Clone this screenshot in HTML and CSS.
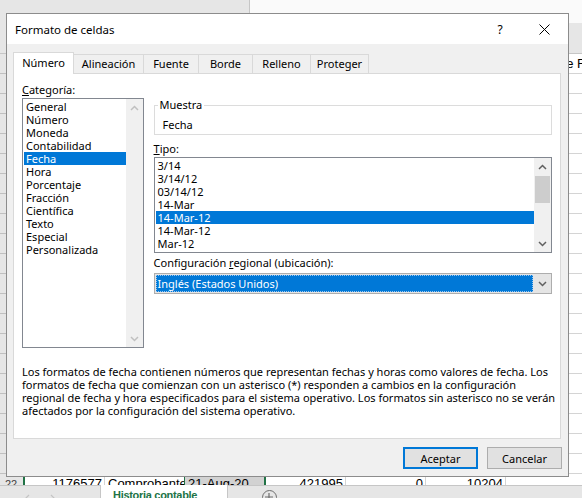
FILE: index.html
```html
<!DOCTYPE html>
<html lang="es">
<head>
  <meta charset="UTF-8" />
  <title>Formato de celdas</title>
  <link rel="stylesheet" href="styles.css">
</head>
<body>
  <!-- Hoja de cálculo de fondo -->
  <div class="sheet">
    <div class="sheet-top">
      <div class="name-box"></div>
      <div class="formula-bar"></div>
    </div>
    <div class="col-heads"></div>
    <div class="grid">
      <div class="row-heads"></div>
      <div class="cells">
        <div class="cell-text">de Fecha</div>
      </div>
    </div>
    <div class="last-row">
      <div class="rh">22</div>
      <div class="c num">1176577</div>
      <div class="c txt">Comprobante</div>
      <div class="c sel">21-Aug-20</div>
      <div class="c num">421995</div>
      <div class="c num">0</div>
      <div class="c num">10204</div>
    </div>
    <div class="sheet-tabs">
      <svg class="nav nav-prev" width="8" height="8" viewBox="0 0 8 8"><polyline points="5,1 2,4 5,7" /></svg>
      <svg class="nav nav-next" width="8" height="8" viewBox="0 0 8 8"><polyline points="3,1 6,4 3,7" /></svg>
      <div class="sheet-tab">Historia contable</div>
      <span class="add-sheet">
        <svg width="14" height="14" viewBox="0 0 14 14"><path d="M7 3 V11 M3 7 H11" /></svg>
      </span>
    </div>
  </div>

  <!-- Cuadro de diálogo -->
  <div class="dialog">
    <div class="titlebar">
      <span class="title">Formato de celdas</span>
      <span class="help">?</span>
      <span class="close">
        <svg width="11" height="11" viewBox="0 0 11 11"><path d="M0.5 0.5 L10.5 10.5 M10.5 0.5 L0.5 10.5" /></svg>
      </span>
    </div>

    <div class="dialog-body">
      <div class="tabs">
        <div class="tab active" style="width:61px">Número</div>
        <div class="tab" style="width:71px">Alineación</div>
        <div class="tab" style="width:56px">Fuente</div>
        <div class="tab" style="width:55px">Borde</div>
        <div class="tab" style="width:59px">Relleno</div>
        <div class="tab" style="width:59px">Proteger</div>
      </div>

      <div class="panel">
        <div class="format-row">
          <div class="col-category">
            <div class="label"><u>C</u>ategoría:</div>
            <div class="listbox category-list">
              <ul>
                <li>General</li>
                <li>Número</li>
                <li>Moneda</li>
                <li>Contabilidad</li>
                <li class="selected">Fecha</li>
                <li>Hora</li>
                <li>Porcentaje</li>
                <li>Fracción</li>
                <li>Científica</li>
                <li>Texto</li>
                <li>Especial</li>
                <li>Personalizada</li>
              </ul>
              <div class="scrollbar disabled">
                <span class="arrow"><svg width="9" height="6" viewBox="0 0 9 6"><polyline points="1,5 4.5,1.5 8,5" /></svg></span>
                <span class="arrow"><svg width="9" height="6" viewBox="0 0 9 6"><polyline points="1,1 4.5,4.5 8,1" /></svg></span>
              </div>
            </div>
          </div>

          <div class="col-detail">
            <fieldset class="sample">
              <legend>Muestra</legend>
              <div class="sample-value">Fecha</div>
            </fieldset>

            <div class="label label-type"><u>T</u>ipo:</div>
            <div class="listbox type-list">
              <ul>
                <li>3/14</li>
                <li>3/14/12</li>
                <li>03/14/12</li>
                <li>14-Mar</li>
                <li class="selected">14-Mar-12</li>
                <li>14-Mar-12</li>
                <li>Mar-12</li>
              </ul>
              <div class="scrollbar">
                <span class="arrow"><svg width="9" height="6" viewBox="0 0 9 6"><polyline points="1,5 4.5,1.5 8,5" /></svg></span>
                <span class="thumb"></span>
                <span class="arrow arrow-down"><svg width="9" height="6" viewBox="0 0 9 6"><polyline points="1,1 4.5,4.5 8,1" /></svg></span>
              </div>
            </div>

            <div class="label label-locale">Configuración <u>r</u>egional (ubicación):</div>
            <div class="combo">
              <div class="combo-value">Inglés (Estados Unidos)</div>
              <div class="combo-btn"><svg width="9" height="6" viewBox="0 0 9 6"><polyline points="1,1 4.5,4.5 8,1" /></svg></div>
            </div>
          </div>
        </div>

        <p class="desc">Los formatos de fecha contienen números que representan fechas y horas como valores de fecha. Los<br>formatos de fecha que comienzan con un asterisco (*) responden a cambios en la configuración<br>regional de fecha y hora especificados para el sistema operativo. Los formatos sin asterisco no se verán<br>afectados por la configuración del sistema operativo.</p>
      </div>

      <div class="actions">
        <button class="btn primary">Aceptar</button>
        <button class="btn">Cancelar</button>
      </div>
    </div>
  </div>
</body>
</html>
```

FILE: styles.css
```css
/* Base */
body {
  margin: 0;
  overflow: hidden;
  font-family: "Noto Sans", "Open Sans", sans-serif;
  font-size: 11px;
  color: #000000;
}

/* Hoja de fondo */
.sheet {
  height: 498px;
  display: flex;
  flex-direction: column;
  background-color: #ffffff;
  font-family: "Liberation Sans", Arial, sans-serif;
  font-size: 13px;
}

.sheet-top {
  height: 23px;
  display: flex;
}

.name-box {
  width: 249px;
  background-color: #e6e6e6;
  border-right: 1px solid #c6c6c6;
}

.formula-bar {
  flex: 1;
  background-color: #fafafa;
}

.col-heads {
  height: 31px;
  box-sizing: border-box;
  background-color: #e6e6e6;
  border-bottom: 1px solid #c6c6c6;
}

.grid {
  height: 420px;
  display: flex;
}

.row-heads {
  width: 23px;
  flex-shrink: 0;
  border-right: 2px solid #e6e6e6;
  background: repeating-linear-gradient(to bottom, #e6e6e6 0 19px, #c0c0c0 19px 20px);
}

.cells {
  flex: 1;
  min-width: 0;
  background: repeating-linear-gradient(to bottom, #ffffff 0 19px, #d4d4d4 19px 20px);
}

.cell-text {
  height: 19px;
  line-height: 19px;
  padding-left: 534px;
  white-space: nowrap;
  overflow: hidden;
}

.last-row {
  height: 11px;
  display: flex;
  overflow: hidden;
  line-height: 20px;
  white-space: nowrap;
}

.last-row .rh {
  width: 25px;
  flex-shrink: 0;
  box-sizing: border-box;
  padding-left: 5px;
  background-color: #e6e6e6;
  border-right: 2px solid #217346;
  color: #444444;
  font-size: 11px;
}

.last-row .c {
  width: 80px;
  flex-shrink: 0;
  box-sizing: border-box;
  overflow: hidden;
  border-right: 1px solid #d4d4d4;
}

.last-row .num {
  text-align: right;
  padding-right: 2px;
}

.last-row .txt {
  width: 79px;
  padding-left: 3px;
  border-right: none;
}

.last-row .sel {
  width: 82px;
  padding-left: 3px;
  background-color: #d2d2d2;
  border-left: 1px solid #217346;
  border-right: 2px solid #217346;
}

.sheet-tabs {
  height: 13px;
  display: flex;
  align-items: flex-start;
  box-sizing: border-box;
  background-color: #e6e6e6;
  border-top: 1px solid #c6c6c6;
}

.nav {
  margin-top: 8px;
  fill: none;
  stroke: #c4c4c4;
  stroke-width: 1.2;
}

.nav-prev {
  margin-left: 24px;
}

.nav-next {
  margin-left: 16px;
}

.sheet-tab {
  width: 128px;
  height: 13px;
  box-sizing: border-box;
  margin-left: 44px;
  margin-top: -1px;
  padding: 4px 0 0 12px;
  background-color: #ffffff;
  border-left: 1px solid #c6c6c6;
  border-right: 1px solid #c6c6c6;
  color: #217346;
  font-weight: bold;
  font-size: 11px;
  letter-spacing: -0.3px;
  line-height: 13px;
  white-space: nowrap;
  overflow: hidden;
}

.add-sheet {
  width: 15px;
  height: 15px;
  box-sizing: border-box;
  margin-left: 34px;
  margin-top: 4px;
  border: 1px solid #6e6e6e;
  border-radius: 50%;
}

.add-sheet svg {
  display: block;
  margin: -1px 0 0 -1px;
  stroke: #6e6e6e;
  stroke-width: 1.2;
}

/* Cuadro de diálogo */
.dialog {
  position: absolute;
  left: 6px;
  top: 13px;
  width: 563px;
  height: 464px;
  box-sizing: border-box;
  display: flex;
  flex-direction: column;
  background-color: #f0f0f0;
  border: 1px solid #8c8c8c;
}

.titlebar {
  height: 30px;
  display: flex;
  align-items: center;
  padding-left: 8px;
  background-color: #ffffff;
}

.title {
  flex: 1;
  font-size: 11.5px;
}

.help {
  width: 30px;
  margin-right: 5px;
  text-align: center;
  font-size: 12px;
}

.close {
  width: 48px;
  display: flex;
  justify-content: center;
}

.close svg {
  stroke: #000000;
  stroke-width: 1;
}

.dialog-body {
  flex: 1;
  padding: 8px 6px 0 6px;
}

.tabs {
  height: 21px;
  display: flex;
  align-items: flex-end;
}

.tab {
  height: 19px;
  box-sizing: border-box;
  margin-left: -1px;
  line-height: 18px;
  text-align: center;
  background-color: #f0f0f0;
  border: 1px solid #d9d9d9;
  border-bottom: none;
}

.tab.active {
  height: 22px;
  margin-left: 0;
  margin-bottom: -1px;
  line-height: 20px;
  position: relative;
  z-index: 1;
  background-color: #ffffff;
}

.panel {
  width: 548px;
  height: 366px;
  box-sizing: border-box;
  padding: 8px 8px 0 8px;
  background-color: #ffffff;
  border: 1px solid #d9d9d9;
}

.format-row {
  display: flex;
  gap: 10px;
}

.col-category {
  width: 122px;
}

.col-detail {
  width: 400px;
}

.label {
  height: 16px;
  line-height: 16px;
  white-space: nowrap;
}

.listbox {
  display: flex;
  box-sizing: border-box;
  background-color: #ffffff;
  border: 1px solid #828790;
}

.listbox ul {
  flex: 1;
  margin: 0;
  padding: 1px 0 0 1px;
  list-style: none;
}

.listbox li {
  height: 13px;
  line-height: 13px;
  padding-left: 2px;
  white-space: nowrap;
}

.listbox li.selected {
  background-color: #0078d7;
  color: #ffffff;
}

.category-list {
  height: 250px;
}

.type-list {
  height: 96px;
}

.scrollbar {
  width: 17px;
  display: flex;
  flex-direction: column;
  background-color: #f0f0f0;
}

.scrollbar .arrow {
  height: 17px;
  display: flex;
  align-items: center;
  justify-content: center;
}

.scrollbar svg,
.combo-btn svg {
  fill: none;
  stroke: #606060;
  stroke-width: 1.5;
}

.scrollbar.disabled {
  justify-content: space-between;
}

.scrollbar.disabled svg {
  stroke: #c0c0c0;
}

.scrollbar .thumb {
  height: 27px;
  margin: 1px 1px 0 1px;
  background-color: #cdcdcd;
}

.scrollbar .arrow-down {
  margin-top: auto;
}

.sample {
  margin: 16px 0 0 0;
  padding: 0 3px 2px 3px;
  border: 1px solid #dcdcdc;
}

.sample legend {
  padding: 0 2px;
  line-height: 14px;
}

.sample-value {
  padding: 6px 0 0 5px;
  line-height: 14px;
}

.label-type {
  margin-top: 6px;
}

.label-locale {
  margin-top: 2px;
}

.combo {
  height: 21px;
  margin-top: 2px;
  display: flex;
  gap: 1px;
  box-sizing: border-box;
  padding: 1px;
  background-color: #e5e5e5;
  border: 1px solid #adadad;
}

.combo-value {
  flex: 1;
  padding-left: 1px;
  line-height: 15px;
  color: #ffffff;
  background-color: #0078d7;
  border: 1px dotted #9cc7ee;
}

.combo-btn {
  width: 16px;
  display: flex;
  align-items: center;
  justify-content: center;
}

.desc {
  margin: 17px 0 0 0;
  line-height: 13px;
  white-space: nowrap;
}

.actions {
  margin-top: 8px;
  display: flex;
  justify-content: flex-end;
  gap: 9px;
}

.btn {
  width: 75px;
  height: 22px;
  padding: 0;
  font-family: inherit;
  font-size: 11px;
  color: #000000;
  background-color: #e1e1e1;
  border: 1px solid #adadad;
}

.btn.primary {
  border: 2px solid #0078d7;
}
```
